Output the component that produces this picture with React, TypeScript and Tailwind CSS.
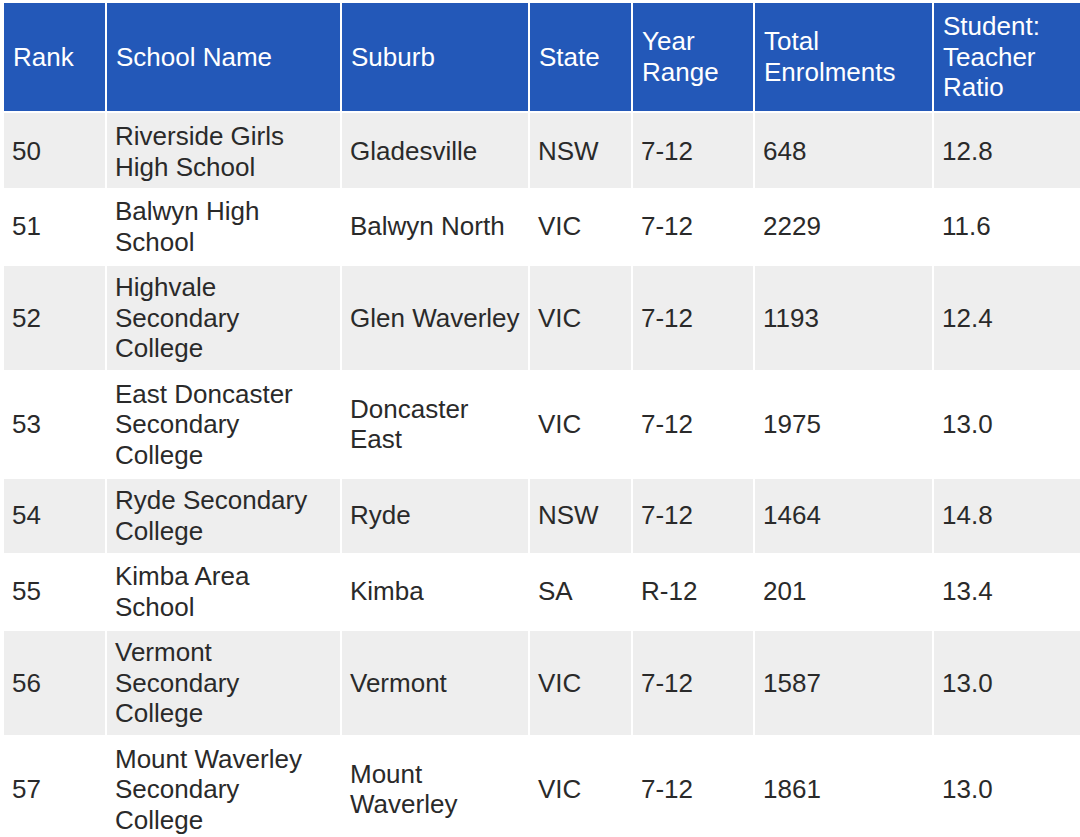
import React from "react";

type Row = {
  rank: string;
  name: string;
  suburb: string;
  state: string;
  years: string;
  total: string;
  ratio: string;
};

const rows: Row[] = [
  { rank: "50", name: "Riverside Girls High School", suburb: "Gladesville", state: "NSW", years: "7-12", total: "648", ratio: "12.8" },
  { rank: "51", name: "Balwyn High School", suburb: "Balwyn North", state: "VIC", years: "7-12", total: "2229", ratio: "11.6" },
  { rank: "52", name: "Highvale Secondary College", suburb: "Glen Waverley", state: "VIC", years: "7-12", total: "1193", ratio: "12.4" },
  { rank: "53", name: "East Doncaster Secondary College", suburb: "Doncaster East", state: "VIC", years: "7-12", total: "1975", ratio: "13.0" },
  { rank: "54", name: "Ryde Secondary College", suburb: "Ryde", state: "NSW", years: "7-12", total: "1464", ratio: "14.8" },
  { rank: "55", name: "Kimba Area School", suburb: "Kimba", state: "SA", years: "R-12", total: "201", ratio: "13.4" },
  { rank: "56", name: "Vermont Secondary College", suburb: "Vermont", state: "VIC", years: "7-12", total: "1587", ratio: "13.0" },
  { rank: "57", name: "Mount Waverley Secondary College", suburb: "Mount Waverley", state: "VIC", years: "7-12", total: "1861", ratio: "13.0" },
];

const headers = [
  { label: "Rank", w: "w-[101px]" },
  { label: "School Name", w: "w-[233px]" },
  { label: "Suburb", w: "w-[186px]" },
  { label: "State", w: "w-[101px]" },
  { label: "Year Range", w: "w-[120px]" },
  { label: "Total Enrolments", w: "w-[177px]" },
  { label: "Student: Teacher Ratio", w: "w-[146px]" },
];

export default function App() {
  return (
    <div
      className="w-[1080px] h-[837px] overflow-hidden bg-white pl-[2px] pt-[1px]"
      style={{ fontFamily: '"Liberation Sans", Arial, Helvetica, sans-serif' }}
    >
      <table className="table-fixed border-separate border-spacing-[2px] w-[1080px] text-[26px] leading-[30.5px]">
        <thead>
          <tr>
            {headers.map((h) => (
              <th
                key={h.label}
                className={`${h.w} bg-[#2358b8] text-white font-normal text-left align-middle pl-[9px] pr-1 pt-[8px] pb-[8.5px]`}
              >
                {h.label}
              </th>
            ))}
          </tr>
        </thead>
        <tbody>
          {rows.map((r, i) => {
            const bg = i % 2 === 0 ? "bg-[#eeeeee]" : "bg-white";
            const cells = [r.rank, r.name, r.suburb, r.state, r.years, r.total, r.ratio];
            return (
              <tr key={r.rank}>
                {cells.map((c, j) => (
                  <td
                    key={j}
                    className={`${bg} text-[#2a2a2a] align-middle pl-2 ${j === 1 ? "pr-2" : "pr-1"} ${i === 0 ? "pt-[8px] pb-[5.5px]" : "py-[6.5px]"}`}
                  >
                    {c}
                  </td>
                ))}
              </tr>
            );
          })}
        </tbody>
      </table>
    </div>
  );
}
